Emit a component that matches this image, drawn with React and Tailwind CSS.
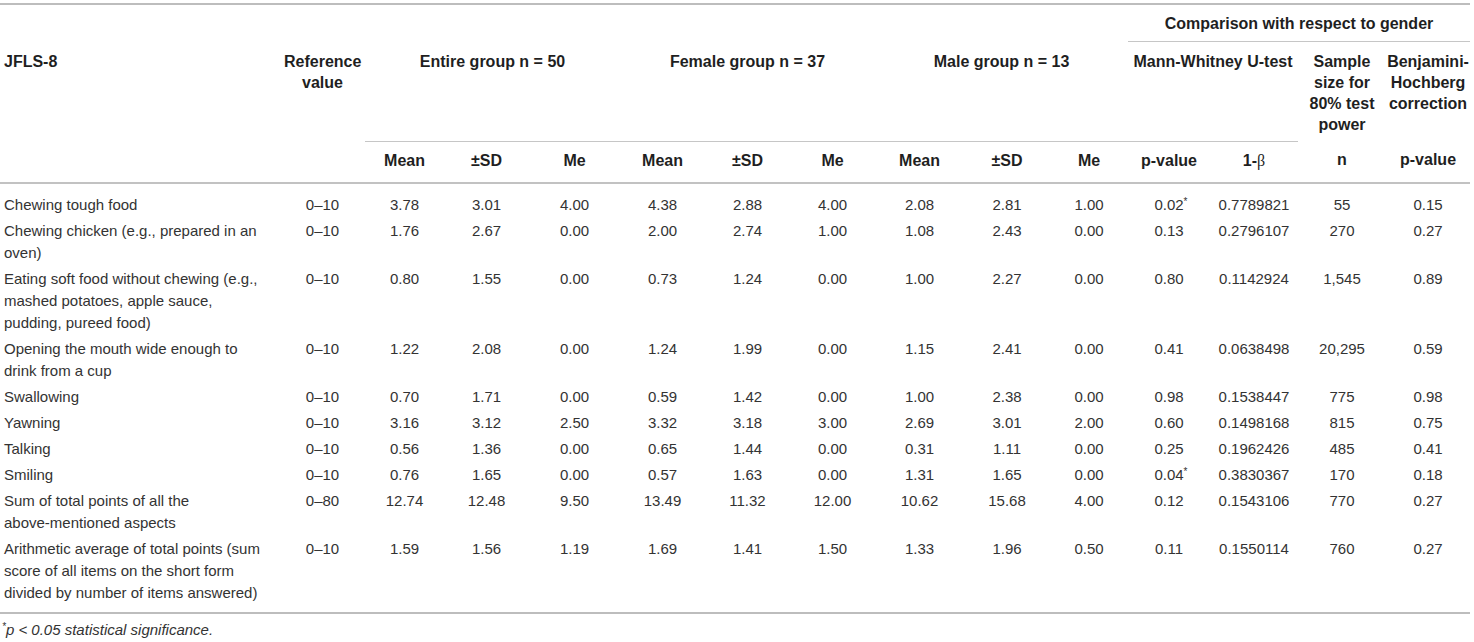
const rows = [
  ["Chewing tough food", "0–10", "3.78", "3.01", "4.00", "4.38", "2.88", "4.00", "2.08", "2.81", "1.00", "0.02*", "0.7789821", "55", "0.15"],
  ["Chewing chicken (e.g., prepared in an oven)", "0–10", "1.76", "2.67", "0.00", "2.00", "2.74", "1.00", "1.08", "2.43", "0.00", "0.13", "0.2796107", "270", "0.27"],
  ["Eating soft food without chewing (e.g., mashed potatoes, apple sauce, pudding, pureed food)", "0–10", "0.80", "1.55", "0.00", "0.73", "1.24", "0.00", "1.00", "2.27", "0.00", "0.80", "0.1142924", "1,545", "0.89"],
  ["Opening the mouth wide enough to drink from a cup", "0–10", "1.22", "2.08", "0.00", "1.24", "1.99", "0.00", "1.15", "2.41", "0.00", "0.41", "0.0638498", "20,295", "0.59"],
  ["Swallowing", "0–10", "0.70", "1.71", "0.00", "0.59", "1.42", "0.00", "1.00", "2.38", "0.00", "0.98", "0.1538447", "775", "0.98"],
  ["Yawning", "0–10", "3.16", "3.12", "2.50", "3.32", "3.18", "3.00", "2.69", "3.01", "2.00", "0.60", "0.1498168", "815", "0.75"],
  ["Talking", "0–10", "0.56", "1.36", "0.00", "0.65", "1.44", "0.00", "0.31", "1.11", "0.00", "0.25", "0.1962426", "485", "0.41"],
  ["Smiling", "0–10", "0.76", "1.65", "0.00", "0.57", "1.63", "0.00", "1.31", "1.65", "0.00", "0.04*", "0.3830367", "170", "0.18"],
  [
    <>
      Sum of total points of all the <span className="whitespace-nowrap">above-mentioned</span> aspects
    </>,
    "0–80", "12.74", "12.48", "9.50", "13.49", "11.32", "12.00", "10.62", "15.68", "4.00", "0.12", "0.1543106", "770", "0.27",
  ],
  ["Arithmetic average of total points (sum score of all items on the short form divided by number of items answered)", "0–10", "1.59", "1.56", "1.19", "1.69", "1.41", "1.50", "1.33", "1.96", "0.50", "0.11", "0.1550114", "760", "0.27"],
];

const widths = [280, 85, 79, 85, 91, 85, 85, 85, 89, 86, 78, 82, 88, 88, 84];

// value with a trailing star: the star hangs outside so the number stays centred
const Value = ({ v }) => {
  if (typeof v === "string" && v.endsWith("*")) {
    return (
      <>
        {v.slice(0, -1)}
        <sup className="inline-block w-0 text-[10px]">*</sup>
      </>
    );
  }
  return v;
};

const subHeads = [
  "Mean", "±SD", "Me", "Mean", "±SD", "Me", "Mean", "±SD", "Me", "p-value",
  <>
    1-<span className="font-['Liberation_Serif',serif] font-normal">β</span>
  </>,
  "n", "p-value",
];

export default function App() {
  return (
    <div className="w-[1474px] bg-white pt-[3px] font-['Liberation_Sans',Arial,sans-serif] text-[15px] text-[#333]">
      <table className="w-[1470px] table-fixed border-collapse border-t-2 border-[#bdbdbd]">
        <colgroup>
          {widths.map((w, i) => (
            <col key={i} style={{ width: w }} />
          ))}
        </colgroup>
        <thead className="text-[16px] font-bold leading-[21px] text-[#1f1f1f]">
          <tr>
            <th colSpan={11} />
            <th colSpan={4} className="border-b border-[#c6c6c6] px-1 pt-2 pb-[7px] text-center">
              Comparison with respect to gender
            </th>
          </tr>
          <tr className="align-top">
            <th className="pl-[4px] pr-3 pt-[9px] pb-[6px] text-left">JFLS-8</th>
            <th className="px-1 pt-[9px] pb-[6px] text-center">Reference value</th>
            <th colSpan={3} className="border-b border-[#c6c6c6] px-1 pt-[9px] pb-[6px] text-center">
              Entire group n = 50
            </th>
            <th colSpan={3} className="border-b border-[#c6c6c6] px-1 pt-[9px] pb-[6px] text-center">
              Female group n = 37
            </th>
            <th colSpan={3} className="border-b border-[#c6c6c6] px-1 pt-[9px] pb-[6px] text-center">
              Male group n = 13
            </th>
            <th colSpan={2} className="border-b border-[#c6c6c6] px-1 pt-[9px] pb-[6px] text-center">
              Mann-Whitney U-test
            </th>
            <th className="px-2 pt-[9px] pb-[6px] text-center">Sample size for 80% test power</th>
            <th className="px-0 pt-[9px] pb-[6px] text-center">Benjamini-Hochberg correction</th>
          </tr>
          <tr className="border-b-2 border-[#c2c2c2]">
            <th className="pt-2 pb-[11px]" />
            <th className="pt-2 pb-[11px]" />
            {subHeads.map((h, i) => (
              <th key={i} className="px-1 pt-2 pb-[11px] text-center">
                {h}
              </th>
            ))}
          </tr>
        </thead>
        <tbody className="leading-[22px]">
          {rows.map((r, ri) => {
            const pad =
              ri === 0 ? "pt-[10px] pb-[2px]" : ri === rows.length - 1 ? "pt-[2px] pb-[8px]" : "py-[2px]";
            return (
              <tr key={ri} className={`align-top ${ri === rows.length - 1 ? "border-b-2 border-[#bdbdbd]" : ""}`}>
                <td className={`pl-[4px] pr-3 text-left ${pad}`}>{r[0]}</td>
                {r.slice(1).map((v, ci) => (
                  <td key={ci} className={`px-1 text-center whitespace-nowrap ${pad}`}>
                    <Value v={v} />
                  </td>
                ))}
              </tr>
            );
          })}
        </tbody>
      </table>
      <p className="pl-[2px] pt-[5px] leading-[22px] italic">
        <sup className="text-[10px]">*</sup>p &lt; 0.05 statistical significance.
      </p>
    </div>
  );
}
